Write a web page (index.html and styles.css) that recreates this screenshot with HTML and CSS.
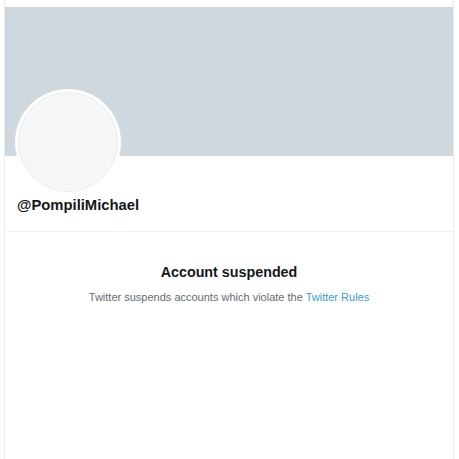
FILE: index.html
```html
<!DOCTYPE html>
<html lang="en">
<head>
<meta charset="utf-8">
<title>@PompiliMichael</title>
<link rel="stylesheet" href="styles.css">
</head>
<body>
<main class="profile">
  <div class="banner"></div>
  <section class="header">
    <div class="avatar"><div class="avatar-inner"></div></div>
    <h1 class="handle">@PompiliMichael</h1>
  </section>
  <section class="notice">
    <h2 class="notice-title">Account suspended</h2>
    <p class="notice-text">Twitter suspends accounts which violate the <a class="notice-link" href="#">Twitter Rules</a></p>
  </section>
</main>
</body>
</html>
```
FILE: styles.css
```css
html, body {
  margin: 0;
  padding: 0;
  background: #ffffff;
}
body {
  font-family: "Liberation Sans", Arial, sans-serif;
  color: #14171a;
}
.profile {
  box-sizing: border-box;
  width: 450px;
  min-height: 459px;
  margin-left: 4px;
  padding-top: 7px;
  border-left: 1px solid #e6ecf0;
  border-right: 1px solid #e6ecf0;
  display: flex;
  flex-direction: column;
}
.banner {
  height: 149px;
  background: #ced8de;
}
.header {
  padding: 0 10px 16px 10px;
  border-bottom: 1px solid #eef1f3;
  display: flex;
  flex-direction: column;
}
.avatar {
  box-sizing: border-box;
  width: 106px;
  height: 106px;
  margin-top: -67px;
  border-radius: 50%;
  background: #ffffff;
  padding: 3px;
}
.avatar-inner {
  box-sizing: border-box;
  width: 100%;
  height: 100%;
  border-radius: 50%;
  background: #f5f7f8;
  border: 1px solid #e8ecee;
}
.handle {
  margin: 0 0 0 2px;
  font-size: 14.8px;
  line-height: 20px;
  font-weight: 700;
  color: #14171a;
}
.notice {
  padding-top: 30px;
  display: flex;
  flex-direction: column;
  align-items: center;
  text-align: center;
}
.notice-title {
  margin: 0;
  font-size: 14.3px;
  line-height: 20px;
  font-weight: 700;
  color: #14171a;
}
.notice-text {
  margin: 7px 0 0 0;
  font-size: 11px;
  line-height: 16px;
  color: #5f6b75;
}
.notice-link {
  color: #3a9ad9;
  text-decoration: none;
}
```
